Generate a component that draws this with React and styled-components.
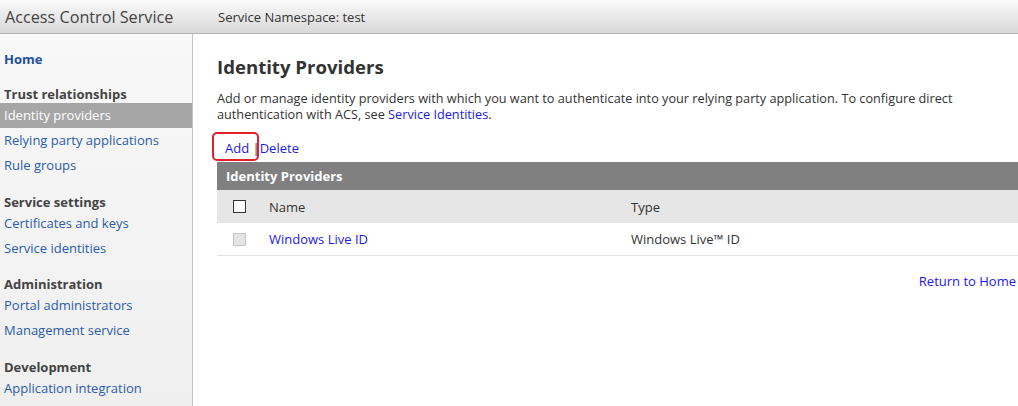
import React from "react";
import styled, { createGlobalStyle } from "styled-components";

const GlobalStyle = createGlobalStyle`
  html, body {
    margin: 0;
    padding: 0;
    background: #fff;
  }
  body {
    font-family: "Open Sans", "Noto Sans", sans-serif;
    font-size: 13px;
    color: #333;
  }
`;

const Page = styled.div`
  display: flex;
  flex-direction: column;
  min-height: 100vh;
`;

const Header = styled.header`
  height: 33px;
  display: flex;
  align-items: center;
  border-bottom: 1px solid #b4b4b4;
  background: linear-gradient(to bottom, #fafafa, #d8d8d8);
`;

const Title = styled.div`
  width: 213px;
  padding-left: 5px;
  font-size: 16.2px;
  color: #444;
  white-space: nowrap;
`;

const Namespace = styled.div`
  font-size: 13px;
  color: #333;
`;

const Body = styled.div`
  flex: 1;
  display: flex;
`;

const Sidebar = styled.nav`
  width: 192px;
  flex-shrink: 0;
  padding-top: 16px;
  border-right: 1px solid #c4c4c4;
  background: linear-gradient(to bottom, #f8f8f8, #efefef);
`;

const HomeLink = styled.a`
  display: block;
  padding-left: 4px;
  margin-bottom: 17px;
  line-height: 18px;
  font-weight: bold;
  color: #1f4f9e;
  text-decoration: none;
`;

const Section = styled.div`
  margin-bottom: 14.5px;
`;

const SectionTitle = styled.div`
  padding-left: 4px;
  height: 18px;
  line-height: 18px;
  font-weight: bold;
  color: #444;
`;

const NavItem = styled.a`
  display: block;
  height: 25px;
  padding-left: 4px;
  line-height: 25px;
  text-decoration: none;
  color: ${(p) => (p.$active ? "#fff" : "#2a5cab")};
  background: ${(p) => (p.$active ? "#a6a6a6" : "transparent")};
`;

const Main = styled.main`
  flex: 1;
  padding: 21px 0 0 24px;
`;

const Heading = styled.h1`
  margin: 0 0 11px;
  font-size: 18.6px;
  line-height: 24px;
  font-weight: bold;
  color: #333;
`;

const Intro = styled.p`
  margin: 0 0 18px;
  font-size: 12.7px;
  line-height: 16px;
  color: #333;
`;

const Link = styled.a`
  color: #1a1ae8;
  text-decoration: none;
`;

const Actions = styled.div`
  padding-left: 8px;
  margin-bottom: 6px;
  line-height: 16px;
  color: #333;
`;

const Highlighted = styled.span`
  position: relative;
  &::after {
    content: "";
    position: absolute;
    left: -13px;
    right: -10px;
    top: -7px;
    bottom: -4px;
    border: 2px solid #e3202b;
    border-radius: 5px;
  }
`;

const Table = styled.div`
  display: grid;
  grid-template-columns: 52px 362px 1fr;
`;

const TableCaption = styled.div`
  grid-column: 1 / -1;
  height: 28px;
  display: flex;
  align-items: center;
  padding-left: 9px;
  background: #808080;
  color: #fff;
  font-weight: bold;
`;

const Cell = styled.div`
  display: flex;
  align-items: center;
  height: ${(p) => (p.$head ? "33px" : "32px")};
  padding-left: ${(p) => (p.$check ? "16px" : "0")};
  background: ${(p) => (p.$head ? "#e6e6e6" : "#fff")};
  border-bottom: ${(p) => (p.$head ? "none" : "1px solid #e2e2e2")};
  color: #333;
`;

const Box = styled.span`
  box-sizing: border-box;
  width: 13px;
  height: 13px;
  border: 1px solid ${(p) => (p.$disabled ? "#c6c6c6" : "#333")};
  background: ${(p) => (p.$disabled ? "#e4e4e4" : "#fff")};
`;

const Footer = styled.div`
  margin-top: 17px;
  padding-right: 2px;
  text-align: right;
  line-height: 16px;
`;

const nav = [
  {
    title: "Trust relationships",
    items: ["Identity providers", "Relying party applications", "Rule groups"],
  },
  {
    title: "Service settings",
    items: ["Certificates and keys", "Service identities"],
  },
  {
    title: "Administration",
    items: ["Portal administrators", "Management service"],
  },
  { title: "Development", items: ["Application integration"] },
];

export default function App() {
  return (
    <Page>
      <GlobalStyle />
      <Header>
        <Title>Access Control Service</Title>
        <Namespace>Service Namespace: test</Namespace>
      </Header>
      <Body>
        <Sidebar>
          <HomeLink href="#">Home</HomeLink>
          {nav.map((s) => (
            <Section key={s.title}>
              <SectionTitle>{s.title}</SectionTitle>
              {s.items.map((i) => (
                <NavItem key={i} href="#" $active={i === "Identity providers"}>
                  {i}
                </NavItem>
              ))}
            </Section>
          ))}
        </Sidebar>
        <Main>
          <Heading>Identity Providers</Heading>
          <Intro>
            Add or manage identity providers with which you want to
            authenticate into your relying party application. To configure
            direct
            <br />
            authentication with ACS, see <Link href="#">Service Identities</Link>.
          </Intro>
          <Actions>
            <Highlighted>
              <Link href="#">Add</Link>
            </Highlighted>{" "}
            |<Link href="#">Delete</Link>
          </Actions>
          <Table>
            <TableCaption>Identity Providers</TableCaption>
            <Cell $head $check>
              <Box />
            </Cell>
            <Cell $head>Name</Cell>
            <Cell $head>Type</Cell>
            <Cell $check>
              <Box $disabled />
            </Cell>
            <Cell>
              <Link href="#">Windows Live ID</Link>
            </Cell>
            <Cell>Windows Live™ ID</Cell>
          </Table>
          <Footer>
            <Link href="#">Return to Home</Link>
          </Footer>
        </Main>
      </Body>
    </Page>
  );
}
